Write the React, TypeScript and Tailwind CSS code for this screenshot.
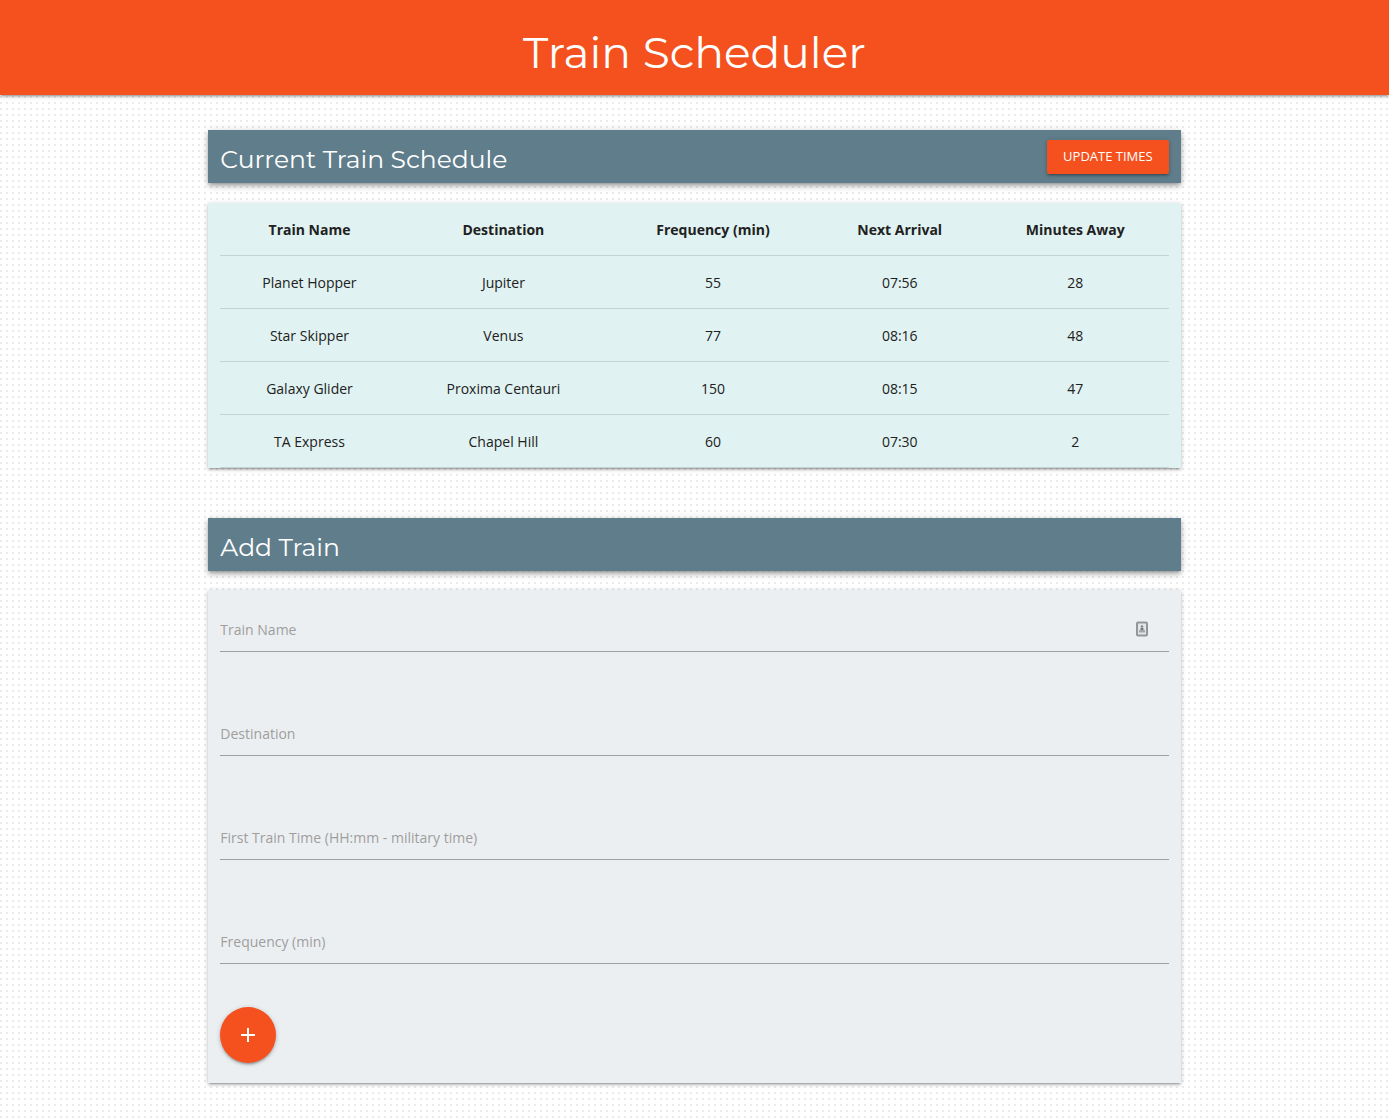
import { useState } from "react";

const trains = [
  { name: "Planet Hopper", destination: "Jupiter", frequency: 55, next: "07:56", away: 28 },
  { name: "Star Skipper", destination: "Venus", frequency: 77, next: "08:16", away: 48 },
  { name: "Galaxy Glider", destination: "Proxima Centauri", frequency: 150, next: "08:15", away: 47 },
  { name: "TA Express", destination: "Chapel Hill", frequency: 60, next: "07:30", away: 2 },
];

const fields = [
  { id: "train-name", label: "Train Name", contact: true },
  { id: "destination", label: "Destination" },
  { id: "first-time", label: "First Train Time (HH:mm - military time)" },
  { id: "frequency", label: "Frequency (min)" },
];

const raised =
  "shadow-[0_2px_2px_0_rgba(0,0,0,0.14),0_3px_1px_-2px_rgba(0,0,0,0.12),0_1px_5px_0_rgba(0,0,0,0.2)]";
const raisedMore =
  "shadow-[0_4px_5px_0_rgba(0,0,0,0.14),0_1px_10px_0_rgba(0,0,0,0.12),0_2px_4px_-1px_rgba(0,0,0,0.3)]";

function ContactIcon() {
  return (
    <svg className="mr-5 size-4 self-center justify-self-end [grid-area:1/1]" viewBox="0 0 16 16" aria-hidden="true">
      <rect x="4" y="1.500" width="10" height="13" rx="1" fill="#e3e5e7" stroke="#939698" strokeWidth="2" />
      <circle cx="9" cy="5.500" r="1.300" fill="#858789" />
      <path d="M7.500 7h3v2h-3z" fill="#77797b" />
      <path d="M6 9h6v2.500H6z" fill="#a4a7a9" />
    </svg>
  );
}

function Field({ id, label, contact }: { id: string; label: string; contact?: boolean }) {
  const [value, setValue] = useState("");
  return (
    <div className="grid">
      <input
        id={id}
        value={value}
        onChange={(e) => setValue(e.target.value)}
        className="h-[46px] w-full border-b border-[#9e9e9e] bg-transparent text-[15px] outline-none [grid-area:1/1] focus:border-[#26a69a]"
      />
      <label
        htmlFor={id}
        className={
          value
            ? "sr-only"
            : "pointer-events-none self-center justify-self-start pt-px text-[14px] leading-5 text-[#9e9e9e] [grid-area:1/1]"
        }
      >
        {label}
      </label>
      {contact && <ContactIcon />}
    </div>
  );
}

export default function App() {
  return (
    <div className="min-h-screen bg-[conic-gradient(at_2px_2px,#fff_75%,#ebebeb_0)] bg-[size:6px_6px] pb-[35px] font-['Open_Sans','Noto_Sans',sans-serif] text-[14px] text-[#212121]">
      <header className={`flex h-[95px] justify-center bg-[#f4511e] pt-[26px] ${raised}`}>
        <h1 className="font-['Montserrat','Inter',sans-serif] text-[44px] leading-[52px] text-white">Train Scheduler</h1>
      </header>
      <main className="mx-auto mt-[35px] w-[70%]">
        <section>
          <div className={`flex h-[53px] items-center justify-between bg-[#607d8b] px-3 ${raisedMore}`}>
            <h2 className="pt-1 font-['Montserrat','Inter',sans-serif] text-[25px] leading-7 text-white">
              Current Train Schedule
            </h2>
            <button type="button" className={`h-[34px] rounded-xs bg-[#f4511e] px-4 text-[13px] text-white uppercase ${raised}`}>
              Update Times
            </button>
          </div>
          <div className={`mt-5 bg-[#e0f2f1] px-3 ${raised}`}>
            <table className="w-full table-fixed border-separate border-spacing-0 text-center [&_td]:border-b [&_td]:border-black/12 [&_th]:border-b [&_th]:border-black/12">
              <colgroup>
                <col className="w-[18.8%]" />
                <col className="w-[22.1%]" />
                <col className="w-[22.1%]" />
                <col className="w-[17.3%]" />
                <col className="w-[19.7%]" />
              </colgroup>
              <thead>
                <tr className="h-[53px]">
                  <th scope="col">Train Name</th>
                  <th scope="col">Destination</th>
                  <th scope="col">Frequency (min)</th>
                  <th scope="col">Next Arrival</th>
                  <th scope="col">Minutes Away</th>
                </tr>
              </thead>
              <tbody>
                {trains.map((t) => (
                  <tr key={t.name} className="h-[53px]">
                    <td>{t.name}</td>
                    <td>{t.destination}</td>
                    <td>{t.frequency}</td>
                    <td>{t.next}</td>
                    <td>{t.away}</td>
                  </tr>
                ))}
              </tbody>
            </table>
          </div>
        </section>
        <section className="mt-[50px]">
          <div className={`flex h-[53px] items-center bg-[#607d8b] px-3 ${raisedMore}`}>
            <h2 className="pt-1 font-['Montserrat','Inter',sans-serif] text-[25px] leading-7 text-white">Add Train</h2>
          </div>
          <form
            onSubmit={(e) => e.preventDefault()}
            className={`mt-[19px] bg-[#eceff1] px-3 pt-4 pb-5 ${raised}`}
          >
            <div className="grid gap-[58px]">
              {fields.map((f) => (
                <Field key={f.id} {...f} />
              ))}
            </div>
            <button
              type="submit"
              aria-label="Add train"
              className={`mt-[43px] grid size-14 place-items-center rounded-full bg-[#f4511e] ${raised}`}
            >
              <svg className="size-6" viewBox="0 0 24 24" fill="#fff" aria-hidden="true">
                <path d="M19 13h-6v6h-2v-6H5v-2h6V5h2v6h6z" />
              </svg>
            </button>
          </form>
        </section>
      </main>
    </div>
  );
}
